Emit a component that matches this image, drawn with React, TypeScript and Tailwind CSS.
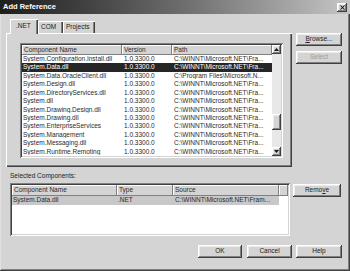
import { X } from 'lucide-react'

const raised =
  'bg-[#d4d4d4] shadow-[inset_-1px_-1px_#404040,inset_1px_1px_#ffffff,inset_-2px_-2px_#808080,inset_2px_2px_#ececec]'
const sunken =
  'shadow-[inset_1px_1px_#808080,inset_-1px_-1px_#ffffff,inset_2px_2px_#404040,inset_-2px_-2px_#d4d4d4]'
const headerCell =
  'h-full flex items-center pl-[2px] bg-[#d4d4d4] shadow-[inset_-1px_-1px_#808080,inset_1px_1px_#ffffff] text-[#2a2a2a] overflow-hidden whitespace-nowrap'

const NET_PATH = 'C:\\WINNT\\Microsoft.NET\\Fra...'

const components = [
  { name: 'System.Configuration.Install.dll', path: NET_PATH },
  { name: 'System.Data.dll', path: NET_PATH, selected: true },
  { name: 'System.Data.OracleClient.dll', path: 'C:\\Program Files\\Microsoft.N...' },
  { name: 'System.Design.dll', path: NET_PATH },
  { name: 'System.DirectoryServices.dll', path: NET_PATH },
  { name: 'System.dll', path: NET_PATH },
  { name: 'System.Drawing.Design.dll', path: NET_PATH },
  { name: 'System.Drawing.dll', path: NET_PATH },
  { name: 'System.EnterpriseServices', path: NET_PATH },
  { name: 'System.Management', path: NET_PATH },
  { name: 'System.Messaging.dll', path: NET_PATH },
  { name: 'System.Runtime.Remoting', path: NET_PATH },
]

function Button({ children, className = '', disabled = false }: { children: React.ReactNode; className?: string; disabled?: boolean }) {
  return (
    <div
      className={`${raised} h-[13px] flex items-center justify-center ${disabled ? 'text-[#9a9a9a]' : 'text-[#222]'} ${className}`}
    >
      {children}
    </div>
  )
}

function Arrow({ up }: { up?: boolean }) {
  return (
    <svg width="5" height="3" viewBox="0 0 5 3">
      <path d={up ? 'M2.5 0 L5 3 L0 3 Z' : 'M0 0 L5 0 L2.5 3 Z'} fill="#1a1a1a" />
    </svg>
  )
}

export default function App() {
  return (
    <div
      className="w-[350px] h-[271px] bg-[#d4d4d4] overflow-hidden flex flex-col text-[6.5px] leading-none shadow-[inset_-1px_-1px_#404040,inset_1px_0_#e0e0e0,inset_-2px_-2px_#808080]"
      style={{ fontFamily: '"Liberation Sans", Arial, sans-serif' }}
    >
      {/* Title bar */}
      <div className="h-[14px] shrink-0 flex items-center justify-between pl-[3px] pr-[3px] bg-gradient-to-r from-[#1e1e1e] via-[#6a6a6a] to-[#c6c6c6]">
        <span className="text-white font-bold text-[7.5px]">Add Reference</span>
        <div className={`${raised} w-[10px] h-[9px] flex items-center justify-center`}>
          <X size={7} strokeWidth={3.5} color="#111" />
        </div>
      </div>

      {/* Tabs + side buttons */}
      <div className="flex pl-[6px] pt-[5px]">
        <div className="w-[286px] flex flex-col">
          <div className="h-[14px] flex items-end pl-[4px]">
            <div className="relative z-10 h-[15px] -mb-[1px] w-[28px] flex items-start pt-[4px] pl-[6px] bg-[#d4d4d4] shadow-[inset_1px_1px_#ffffff,inset_-1px_0_#404040,inset_-2px_0_#808080] text-[#222]">
              .NET
            </div>
            <div className="h-[12px] w-[25px] flex items-start pt-[3px] pl-[3px] shadow-[inset_1px_1px_#ffffff,inset_-1px_0_#404040,inset_-2px_0_#808080] text-[#222]">
              COM
            </div>
            <div className="h-[12px] w-[32px] flex items-start pt-[3px] pl-[3px] shadow-[inset_1px_1px_#ffffff,inset_-1px_0_#404040,inset_-2px_0_#808080] text-[#222]">
              Projects
            </div>
          </div>
          <div className="h-[134px] pl-[14px] pt-[10px] shadow-[inset_1px_1px_#ffffff,inset_-1px_-1px_#404040,inset_-2px_-2px_#808080]">
            {/* Component list */}
            <div className={`${sunken} bg-white w-[263px] h-[115px] p-[2px]`}>
              <div className="flex h-full overflow-hidden">
                <div className="w-[250px] flex flex-col overflow-hidden">
                  <div className="flex h-[10px] shrink-0">
                    <div className={`${headerCell} w-[100px]`}>Component Name</div>
                    <div className={`${headerCell} w-[50px]`}>Version</div>
                    <div className={`${headerCell} w-[100px]`}>Path</div>
                  </div>
                  {components.map((c) => (
                    <div
                      key={c.name}
                      className={`flex h-[8.45px] shrink-0 items-center whitespace-nowrap ${
                        c.selected ? 'bg-[#262626] text-white' : 'text-[#2a2a2a]'
                      }`}
                    >
                      <div className="w-[100px] pl-[1px] overflow-hidden">{c.name}</div>
                      <div className="w-[50px] pl-[2px] overflow-hidden">1.0.3300.0</div>
                      <div className="w-[100px] pl-[2px] overflow-hidden">{c.path}</div>
                    </div>
                  ))}
                </div>
                {/* Scrollbar */}
                <div className="w-[9px] flex flex-col bg-[#e8e8e8]">
                  <div className={`${raised} h-[9px] shrink-0 flex items-center justify-center`}>
                    <Arrow up />
                  </div>
                  <div className="h-[60px] shrink-0" />
                  <div className={`${raised} h-[16px] shrink-0`} />
                  <div className="flex-1" />
                  <div className={`${raised} h-[9px] shrink-0 flex items-center justify-center`}>
                    <Arrow />
                  </div>
                </div>
              </div>
            </div>
          </div>
        </div>
        <div className="ml-[4px] mt-[14px] flex flex-col gap-[5px]">
          <Button className="w-[46px]">
            <span>
              <span className="underline">B</span>rowse...
            </span>
          </Button>
          <Button className="w-[46px]" disabled>
            Select
          </Button>
        </div>
      </div>

      {/* Selected components */}
      <div className="pl-[10px] mt-[6px] text-[#222]">Selected Components:</div>
      <div className="flex pl-[10px] mt-[3px]">
        <div className={`${sunken} bg-white w-[280px] h-[53px] p-[2px]`}>
          <div className="flex flex-col h-full overflow-hidden">
            <div className="flex h-[11px] shrink-0">
              <div className={`${headerCell} w-[105px]`}>Component Name</div>
              <div className={`${headerCell} w-[56px]`}>Type</div>
              <div className={`${headerCell} w-[106px]`}>Source</div>
              <div className={`${headerCell} w-[9px]`} />
            </div>
            <div className="flex h-[9px] items-center whitespace-nowrap text-[#2a2a2a]">
              <div className="flex h-full items-center bg-[#c8c8c8]">
                <div className="w-[105px] pl-[1px]">System.Data.dll</div>
                <div className="w-[56px] pl-[1px]">.NET</div>
                <div className="w-[106px] pl-[2px] overflow-hidden">C:\WINNT\Microsoft.NET\Fram...</div>
              </div>
            </div>
          </div>
        </div>
        <Button className="w-[48px] h-[12px] ml-[3px] mt-[1px]">
          <span>
            Remo<span className="underline">v</span>e
          </span>
        </Button>
      </div>

      {/* Dialog buttons */}
      <div className="flex pl-[198px] mt-[9px]">
        <Button className="w-[44px]">OK</Button>
        <Button className="w-[45px] ml-[5px]">Cancel</Button>
        <Button className="w-[46px] ml-[4px]">Help</Button>
      </div>
    </div>
  )
}
